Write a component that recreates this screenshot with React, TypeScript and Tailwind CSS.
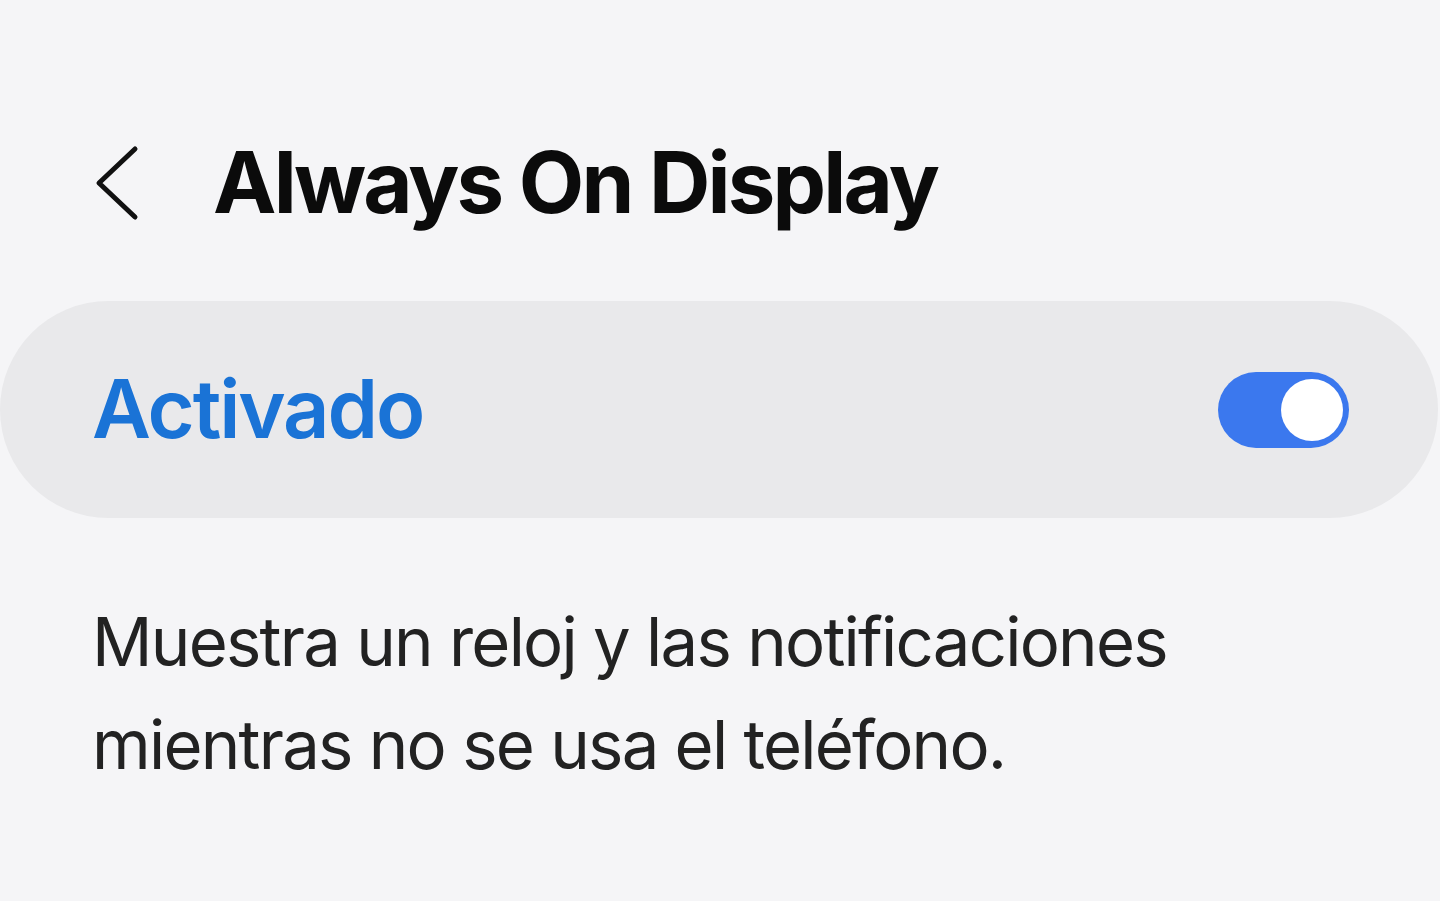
import React from "react";

function BackChevron() {
  return (
    <svg width="46" height="78" viewBox="0 0 46 78" fill="none" className="block">
      <path
        d="M40 5 L4 39 L40 73"
        stroke="#111111"
        strokeWidth="5"
        strokeLinecap="round"
        strokeLinejoin="round"
      />
    </svg>
  );
}

function Toggle() {
  return (
    <div className="relative h-[76px] w-[131px] rounded-full bg-[#3b78ee]">
      <div className="absolute right-[6px] top-[7px] h-[62px] w-[62px] rounded-full bg-white shadow-[0_0_0_1px_#3b78ee]" />
    </div>
  );
}

export default function App() {
  return (
    <div
      className="h-[901px] w-[1440px] overflow-hidden bg-[#f5f5f7]"
      style={{ fontFamily: "Inter, 'Noto Sans', sans-serif" }}
    >
      <div className="flex flex-col pt-[140px]">
        <div className="flex h-[85px] items-center">
          <div className="ml-[95px]">
            <BackChevron />
          </div>
          <h1 className="ml-[72px] text-[85px] font-bold leading-none tracking-[-2.8px] text-[#0b0b0b]">
            Always On Display
          </h1>
        </div>

        <div className="mt-[76px] flex h-[217px] w-[1438px] items-center justify-between rounded-full bg-[#e9e9eb] pl-[92px] pr-[89px]">
          <span className="text-[81px] font-semibold leading-none tracking-[-2.1px] text-[#1a73d6]">
            Activado
          </span>
          <Toggle />
        </div>

        <p className="mt-[72px] pl-[92px] text-[67px] font-normal leading-[103px] tracking-[-1.75px] text-[#222222]">
          Muestra un reloj y las notificaciones
          <br />
          mientras no se usa el teléfono.
        </p>
      </div>
    </div>
  );
}
